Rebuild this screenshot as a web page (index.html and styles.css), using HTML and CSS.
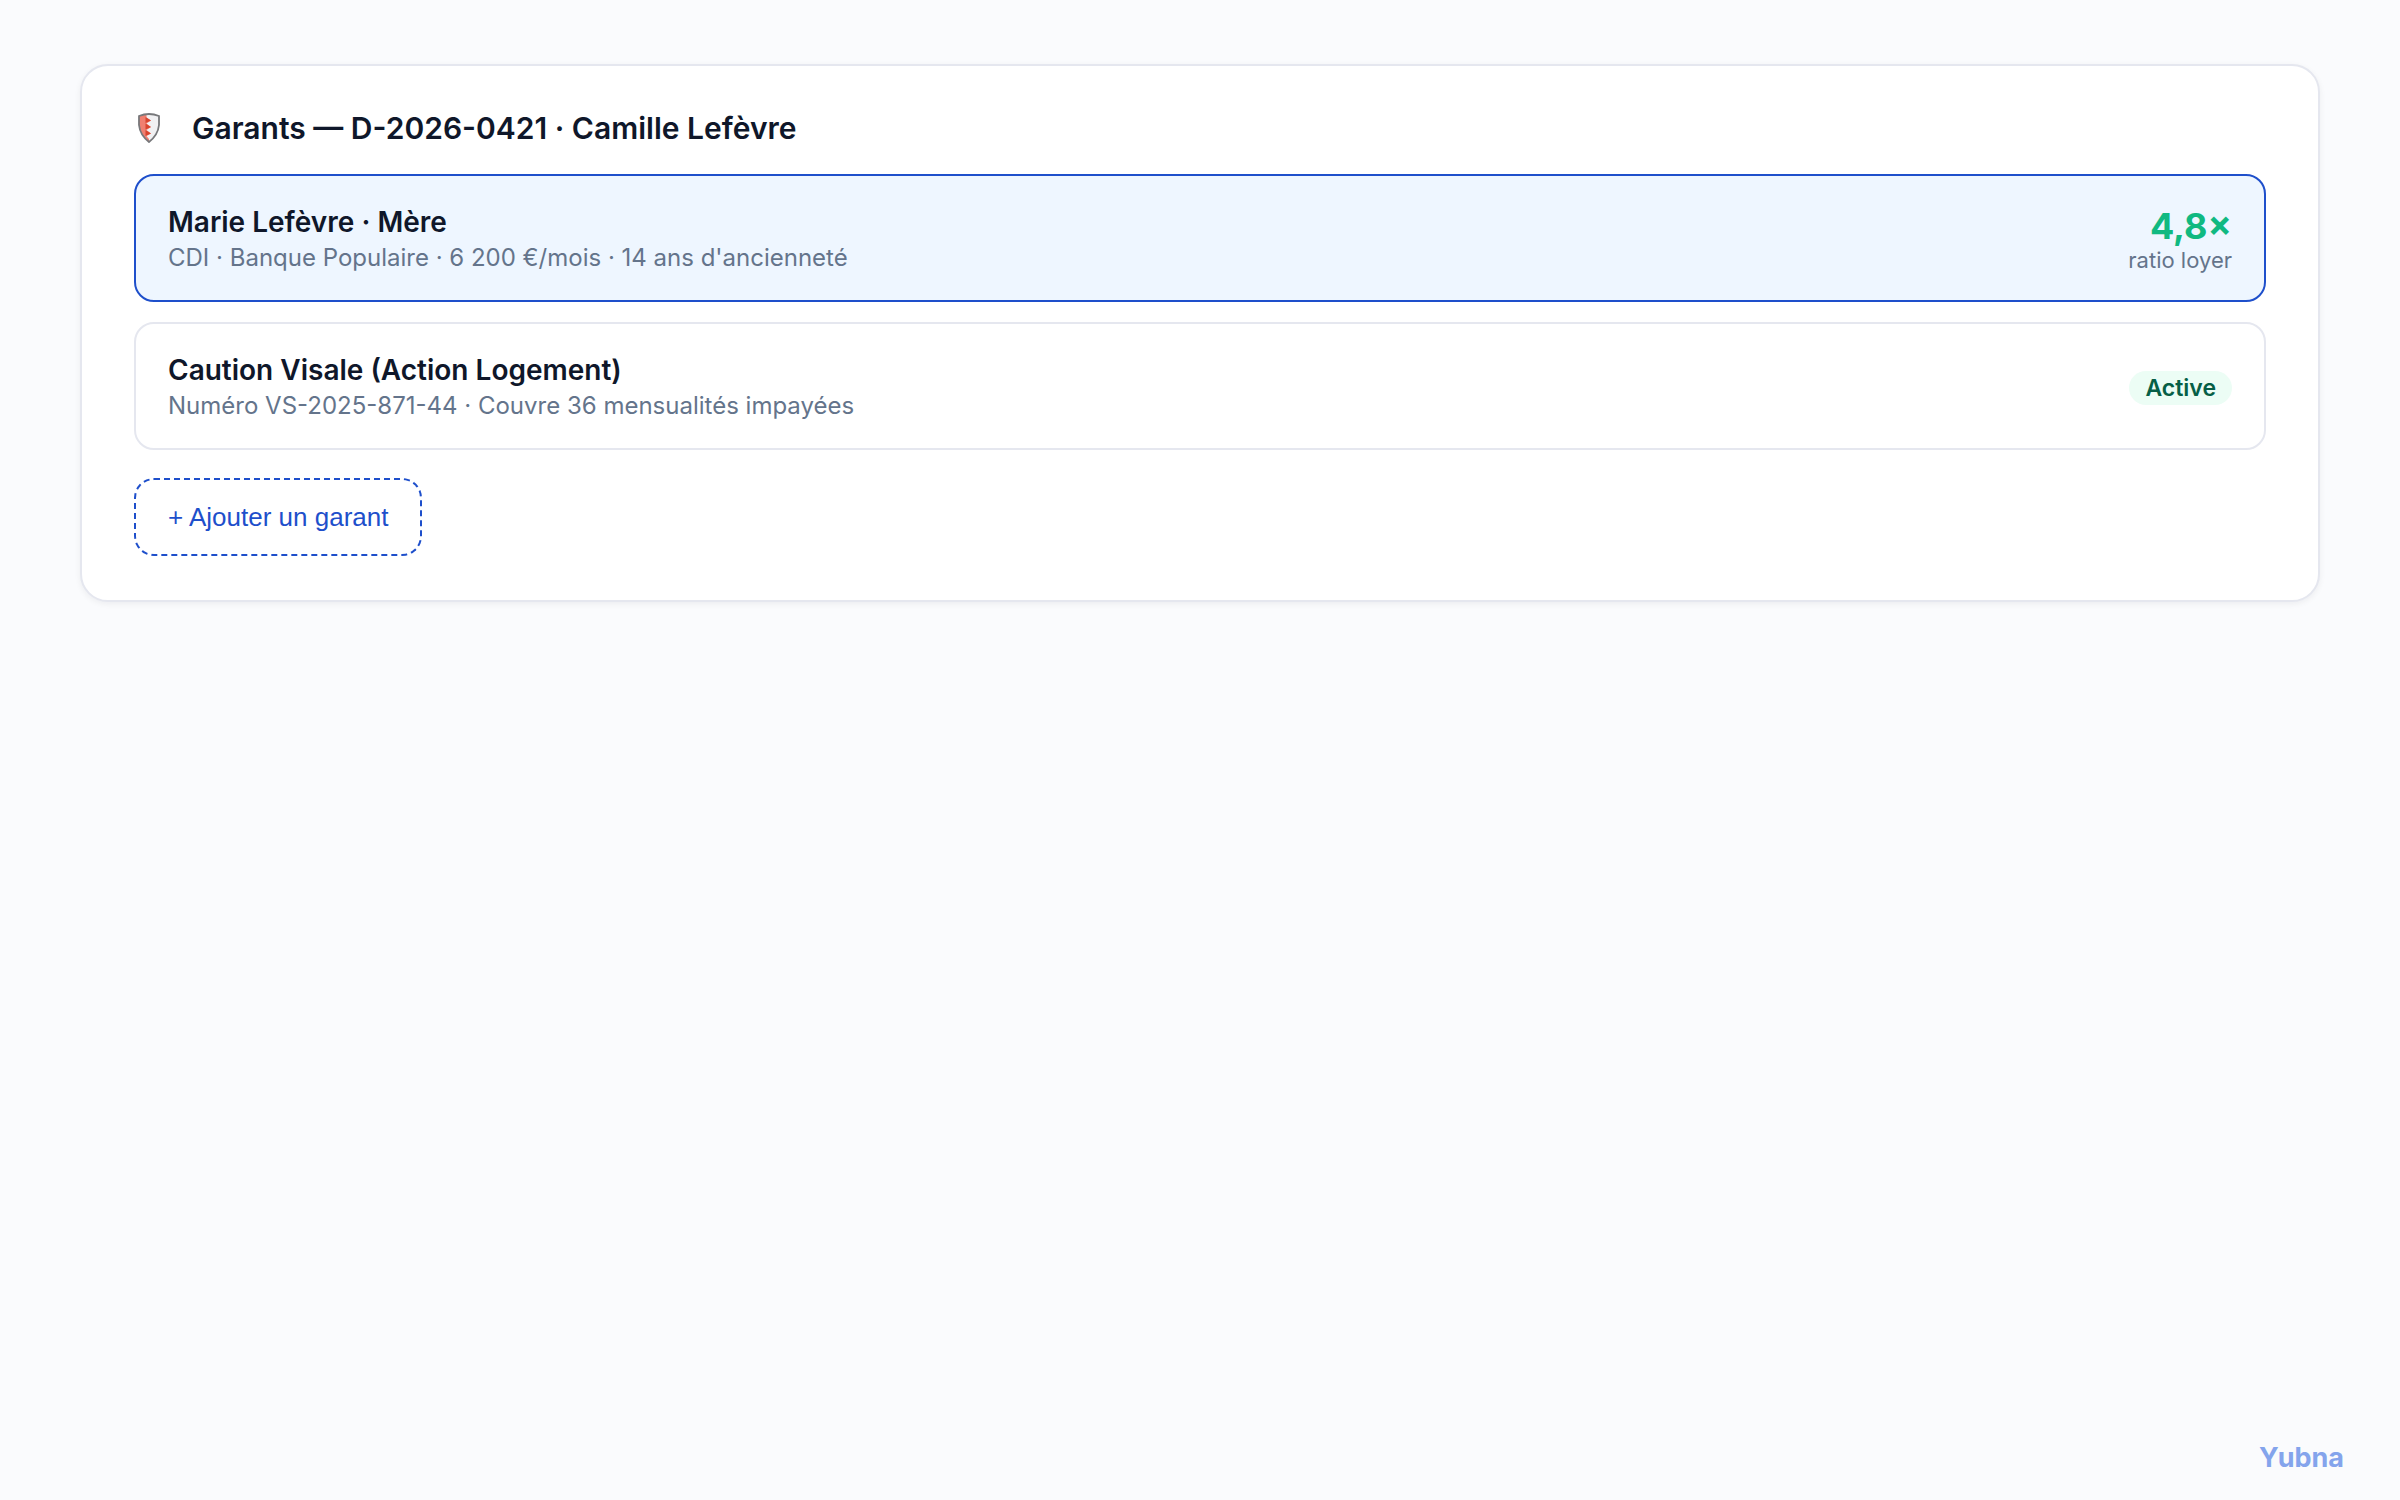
FILE: index.html
```
<!DOCTYPE html>
<html lang="fr">
<head>
    <meta charset="UTF-8">
    <meta name="viewport" content="width=device-width, initial-scale=1.0">
    <title>Garants</title>
    <link rel="stylesheet" href="styles.css">
</head>
<body>

<main class="card">
    <h2 class="card-title">
        <svg class="shield" viewBox="0 0 22 30" aria-hidden="true">
            <path d="M1 3Q11 -1 21 3V12Q20 22 11 29Q2 22 1 12Z" fill="#f1f1f3"/>
            <path d="M1 3Q5 1.200 8.500 1V4.500L13 7.500L8.500 10.500L13 14L8.500 17L13 20.500L8.500 23L11 26V29Q2 22 1 12Z" fill="#f07f70"/>
            <path d="M7.500 4L13 7.500L7.500 10ZM7.500 10.500L13 14L7.500 16.500ZM7.500 17L13 20.500L7.500 23Z" fill="#d8452f"/>
            <path d="M1 3Q11 -1 21 3V12Q20 22 11 29Q2 22 1 12Z" fill="none" stroke="#77787b" stroke-width="1.800"/>
        </svg>
        Garants — D-2026-0421 · Camille Lefèvre
    </h2>

    <!-- Liste des garants -->
    <div class="guarantor selected">
        <div>
            <div class="name">Marie Lefèvre · Mère</div>
            <div class="details">CDI · Banque Populaire · 6 200 €/mois · 14 ans d'ancienneté</div>
        </div>
        <div class="ratio">
            <div class="ratio-value">4,8×</div>
            <div class="ratio-label">ratio loyer</div>
        </div>
    </div>
    <div class="guarantor">
        <div>
            <div class="name">Caution Visale (Action Logement)</div>
            <div class="details">Numéro VS-2025-871-44 · Couvre 36 mensualités impayées</div>
        </div>
        <span class="badge">Active</span>
    </div>

    <button type="button" class="add-button">+ Ajouter un garant</button>
</main>

<footer class="brand">Yubna</footer>

</body>
</html>
```
FILE: styles.css
```
* {
    box-sizing: border-box;
}
body {
    font-family: Inter, 'Liberation Sans', sans-serif;
    background-color: #fafbfd;
    color: #0f172a;
    margin: 0;
    padding: 64px 80px 24px;
    min-height: 100vh;
    display: flex;
    flex-direction: column;
}
.card {
    background-color: #ffffff;
    border: 2px solid #e5e7ef;
    border-radius: 28px;
    padding: 42px 52px 44px;
    box-shadow: 0 2px 6px rgba(15, 23, 42, 0.06);
}
.card-title {
    display: flex;
    align-items: center;
    gap: 32px;
    margin: 0 0 26px;
    padding-left: 4px;
    font-size: 30px;
    line-height: 40px;
    font-weight: 600;
}
.shield {
    width: 22px;
    height: 30px;
}
.guarantor {
    display: flex;
    justify-content: space-between;
    align-items: center;
    min-height: 128px;
    padding: 26px 32px 22px;
    margin-bottom: 20px;
    border: 2px solid #e5e7ef;
    border-radius: 20px;
}
.guarantor.selected {
    background-color: #eef6ff;
    border-color: #1e4fcb;
}
.name {
    font-size: 28px;
    line-height: 36px;
    font-weight: 600;
}
.details {
    font-size: 24px;
    line-height: 36px;
    color: #64748b;
}
.ratio {
    text-align: right;
}
.ratio-value {
    font-size: 36px;
    line-height: 40px;
    font-weight: 700;
    color: #10b981;
}
.ratio-label {
    font-size: 22px;
    line-height: 28px;
    color: #64748b;
}
.badge {
    padding: 2px 16px;
    border-radius: 20px;
    background-color: #ecfdf5;
    color: #065f46;
    font-size: 23px;
    line-height: 30px;
    font-weight: 600;
}
.add-button {
    display: block;
    margin-top: 28px;
    padding: 22px 32px;
    border: 2px dashed #1e4fcb;
    border-radius: 20px;
    background-color: transparent;
    color: #1e4fcb;
    font-family: 'Liberation Sans', Arial, sans-serif;
    font-size: 26px;
    line-height: 30px;
    cursor: pointer;
}
.brand {
    margin-top: auto;
    margin-right: -24px;
    text-align: right;
    font-size: 27px;
    line-height: 36px;
    font-weight: 700;
    color: #84a4ec;
}
```
